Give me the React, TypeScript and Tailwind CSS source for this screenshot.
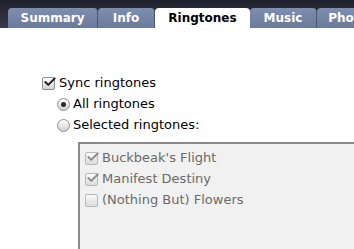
import { Check } from "lucide-react"

const TABS = [
  { label: "Summary", w: "w-[90px]" },
  { label: "Info", w: "w-[57px]" },
  { label: "Ringtones", w: "w-[95px]", active: true },
  { label: "Music", w: "w-[67px]" },
  { label: "Photos", w: "w-[70px]" },
]

const ITEMS = [
  { name: "Buckbeak's Flight", checked: true },
  { name: "Manifest Destiny", checked: true },
  { name: "(Nothing But) Flowers", checked: false },
]

function Checkbox({ checked, dim }: { checked: boolean; dim?: boolean }) {
  return (
    <span
      className={`relative w-[13px] h-[13px] shrink-0 rounded-[2px] border ${
        dim
          ? "border-[#b8b8b8] bg-gradient-to-b from-[#fafafa] to-[#dcdcdc]"
          : "border-[#8e8e8e] bg-gradient-to-b from-[#ffffff] to-[#d4d4d4]"
      }`}
    >
      {checked && (
        <Check
          className={`absolute -top-[3px] left-[0px] w-[14px] h-[14px] ${dim ? "text-[#8a8a8a]" : "text-[#1d1d1d]"}`}
          strokeWidth={3.2}
        />
      )}
    </span>
  )
}

function Radio({ on }: { on: boolean }) {
  return (
    <span className="w-[13px] h-[13px] shrink-0 rounded-full border border-[#8e8e8e] bg-gradient-to-b from-[#ffffff] to-[#d0d0d0] flex items-center justify-center">
      {on && <span className="w-[5px] h-[5px] rounded-full bg-[#2a2a2a]" />}
    </span>
  )
}

export default function App() {
  return (
    <div className="w-[354px] h-[249px] overflow-hidden bg-white font-['DejaVu_Sans',sans-serif]">
      {/* Tab bar */}
      <div className="h-[28px] bg-gradient-to-b from-[#1e212c] to-[#363a49] flex items-end pl-[8px] overflow-hidden">
        {TABS.map((t) => (
          <div
            key={t.label}
            className={`${t.w} h-[20px] shrink-0 flex items-center justify-center rounded-t-[4px] text-[12px] font-bold ${
              t.active
                ? "bg-white text-black"
                : "bg-gradient-to-b from-[#7e8eae] to-[#6a7a9a] text-white border-r border-[#4c5670]"
            }`}
          >
            {t.label}
          </div>
        ))}
      </div>

      {/* Content */}
      <div className="pl-[42px] pt-[48px] text-[13px] text-black">
        <label className="flex items-center gap-[4px] h-[14px]">
          <Checkbox checked />
          <span>Sync ringtones</span>
        </label>
        <div className="pl-[15px] mt-[7px] flex flex-col gap-[7px]">
          <label className="flex items-center gap-[3px] h-[14px]">
            <Radio on />
            <span>All ringtones</span>
          </label>
          <label className="flex items-center gap-[3px] h-[14px]">
            <Radio on={false} />
            <span>Selected ringtones:</span>
          </label>
        </div>

        {/* List box */}
        <div className="ml-[36px] mt-[10px] h-[120px] border-t-2 border-l-2 border-[#8a8a8a] bg-[#f1f1f1] pl-[5px] pt-[7px] flex flex-col gap-[7px] text-[#6a6a6a]">
          {ITEMS.map((it) => (
            <label key={it.name} className="flex items-center gap-[4px] h-[14px]">
              <Checkbox checked={it.checked} dim />
              <span>{it.name}</span>
            </label>
          ))}
        </div>
      </div>
    </div>
  )
}
